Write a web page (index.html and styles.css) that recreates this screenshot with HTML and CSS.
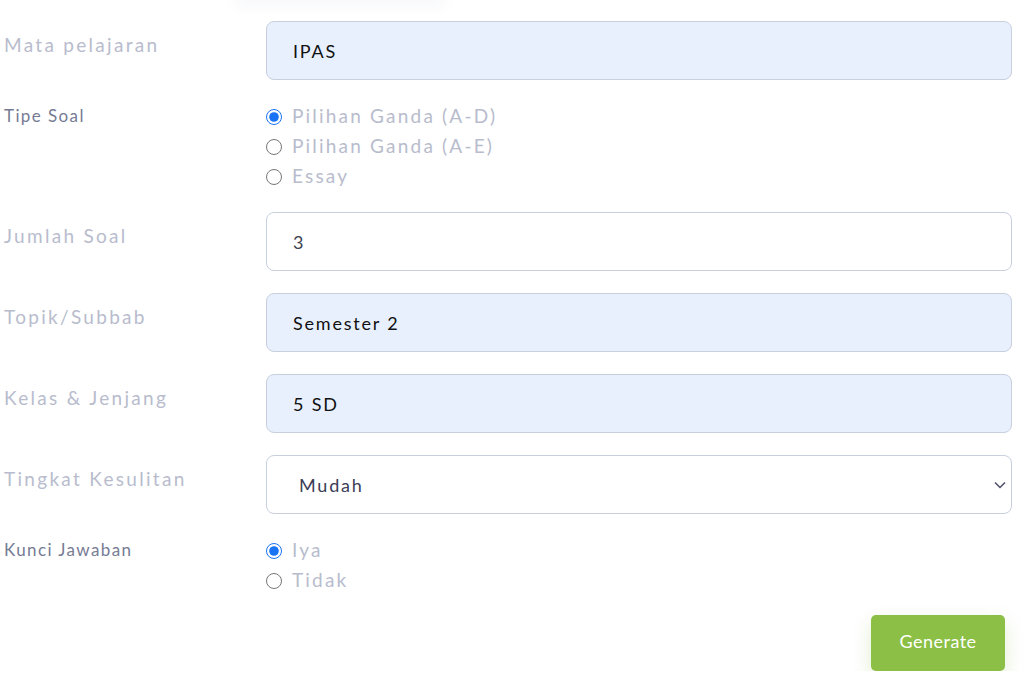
FILE: index.html
```html
<!DOCTYPE html>
<html lang="id">
<head>
    <meta charset="UTF-8">
    <meta name="viewport" content="width=device-width, initial-scale=1.0">
    <title>Generate Soal</title>
    <link rel="stylesheet" href="styles.css">
</head>
<body>
    <div class="top-shadow"></div>

    <form class="soal-form">
        <div class="form-row">
            <label class="field-label" for="mapel">Mata pelajaran</label>
            <input class="field-input filled" type="text" id="mapel" value="IPAS">
        </div>

        <div class="form-row radio-row">
            <span class="group-label">Tipe Soal</span>
            <div class="radio-list">
                <label class="radio-item"><input type="radio" name="tipe" checked> Pilihan Ganda (A-D)</label>
                <label class="radio-item"><input type="radio" name="tipe"> Pilihan Ganda (A-E)</label>
                <label class="radio-item"><input type="radio" name="tipe"> Essay</label>
            </div>
        </div>

        <div class="form-row">
            <label class="field-label" for="jumlah">Jumlah Soal</label>
            <input class="field-input plain" type="number" id="jumlah" value="3">
        </div>

        <div class="form-row">
            <label class="field-label" for="topik">Topik/Subbab</label>
            <input class="field-input filled" type="text" id="topik" value="Semester 2">
        </div>

        <div class="form-row">
            <label class="field-label" for="kelas">Kelas &amp; Jenjang</label>
            <input class="field-input filled" type="text" id="kelas" value="5 SD">
        </div>

        <div class="form-row">
            <label class="field-label" for="tingkat">Tingkat Kesulitan</label>
            <div class="select-wrap">
                <select class="field-input select" id="tingkat">
                    <option>Mudah</option>
                    <option>Sedang</option>
                    <option>Sulit</option>
                </select>
                <svg class="select-arrow" width="12" height="8" viewBox="0 0 12 8">
                    <path d="M1 1.5 L6 6.5 L11 1.5" fill="none" stroke="#4a4d66" stroke-width="1.5"/>
                </svg>
            </div>
        </div>

        <div class="form-row radio-row">
            <span class="group-label">Kunci Jawaban</span>
            <div class="radio-list">
                <label class="radio-item"><input type="radio" name="kunci" checked> Iya</label>
                <label class="radio-item"><input type="radio" name="kunci"> Tidak</label>
            </div>
        </div>

        <div class="actions">
            <button type="button" class="btn-generate">Generate</button>
        </div>
    </form>
</body>
</html>
```

FILE: styles.css
```css
/* Page */
body {
    margin: 0;
    padding: 0;
    font-family: "Lato", "Noto Sans", sans-serif;
    background-color: #ffffff;
    overflow: hidden;
}

.top-shadow {
    width: 200px;
    height: 0;
    margin-left: 240px;
    box-shadow: 0 0 14px 5px rgba(40, 50, 90, 0.05);
}

/* Form */
.soal-form {
    padding: 21px 12px 0 4px;
}

.form-row {
    display: grid;
    grid-template-columns: 262px 1fr;
    margin-bottom: 22px;
}

.radio-row {
    margin-bottom: 20px;
}

.field-label {
    padding-top: 12px;
    line-height: 24px;
    font-size: 19px;
    letter-spacing: 2.3px;
    color: #b8bccd;
}

.group-label {
    padding-top: 2px;
    line-height: 24px;
    font-size: 17px;
    letter-spacing: 1.4px;
    color: #767b94;
}

.field-input {
    box-sizing: border-box;
    width: 100%;
    height: 59px;
    padding: 0 26px;
    border: 1px solid #c8d0de;
    border-radius: 8px;
    font-family: inherit;
    font-size: 18px;
    letter-spacing: 1.8px;
    color: #111111;
    outline: none;
}

.field-input.filled {
    background-color: #e8f0fe;
}

.field-input.plain {
    background-color: #ffffff;
    color: #3e4152;
}

.field-input.plain::-webkit-inner-spin-button {
    -webkit-appearance: none;
}

.select-wrap {
    position: relative;
}

.field-input.select {
    -webkit-appearance: none;
    appearance: none;
    background-color: #ffffff;
    padding-left: 32px;
    color: #3b3d56;
}

.select-arrow {
    position: absolute;
    right: 6px;
    top: 26px;
}

/* Radios */
.radio-list {
    display: flex;
    flex-direction: column;
}

.radio-item {
    display: flex;
    align-items: center;
    height: 30px;
    box-sizing: border-box;
    padding-bottom: 3px;
    font-size: 19px;
    letter-spacing: 2.2px;
    color: #b8bccd;
}

.radio-item input {
    width: 16px;
    height: 16px;
    margin: 3px 10px 0 0;
    accent-color: #1a73f5;
}

/* Button */
.actions {
    display: flex;
    justify-content: flex-end;
    padding-right: 7px;
    margin-top: -1px;
}

.btn-generate {
    width: 134px;
    height: 56px;
    padding-bottom: 5px;
    background-color: #8bbf45;
    color: #ffffff;
    border: none;
    border-radius: 5px;
    font-family: inherit;
    font-size: 18px;
    letter-spacing: 0.5px;
    cursor: pointer;
    box-shadow: 0 8px 18px rgba(140, 191, 68, 0.25);
}
```
